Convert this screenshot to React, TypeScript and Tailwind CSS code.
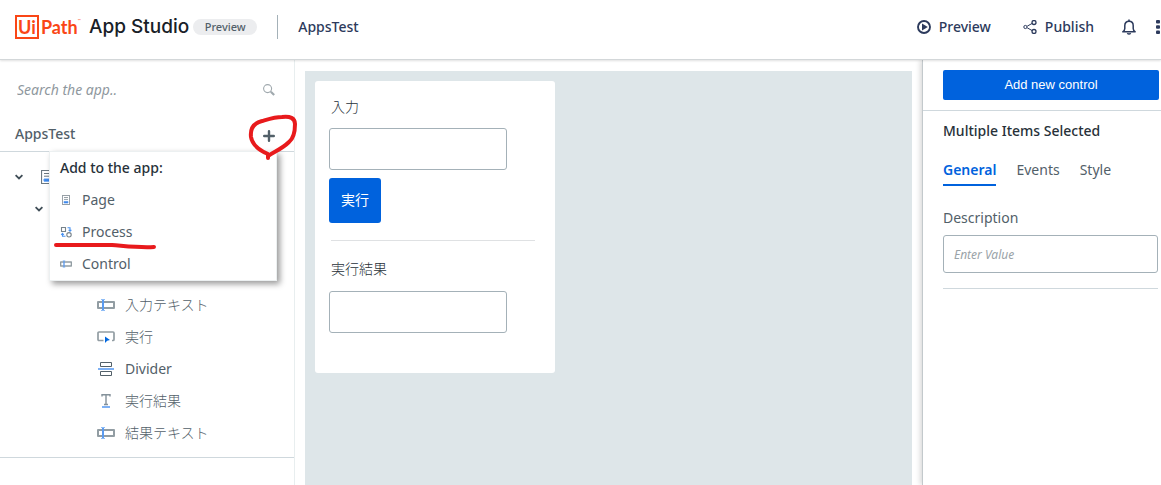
import React, { useState } from 'react'

interface IconProps {
  className?: string
}

function SearchIcon({ className }: IconProps) {
  return (
    <svg className={className} viewBox="0 0 12 12" fill="none" stroke="#a0a9ae">
      <circle cx="4.6" cy="4.6" r="4" strokeWidth="1.1" />
      <path d="M7.8 7.8L11.2 11" strokeWidth="2.2" />
    </svg>
  )
}

function PlusIcon({ className }: IconProps) {
  return (
    <svg className={className} viewBox="0 0 12 12" fill="none" stroke="#526069" strokeWidth="2.4" strokeLinecap="round">
      <path d="M6 1.2V10.8M1.2 6H10.8" />
    </svg>
  )
}

function CaretIcon({ className }: IconProps) {
  return (
    <svg className={className} viewBox="0 0 8 6" fill="none" stroke="#3f4d56" strokeWidth="1.8">
      <path d="M0.6 1.2L4 4.4L7.4 1.2" />
    </svg>
  )
}

function PageIcon({ className }: IconProps) {
  return (
    <svg className={className} viewBox="0 0 12 14" fill="none" stroke="#6b7881" preserveAspectRatio="none">
      <path d="M0.5 0.5H11.5V13.5H0.5Z" strokeWidth="1.2" />
      <path d="M3 3.5H9M3 6.2H9" />
      <path d="M3 9H9V11.2H3Z" fill="#2d7de8" stroke="#5b9bf0" />
    </svg>
  )
}

function ProcessIcon({ className }: IconProps) {
  return (
    <svg className={className} viewBox="0 0 12 12" fill="none" stroke="#77838b" strokeWidth="1.1">
      <path d="M1.5 1.5H5.5V5.5H1.5Z" />
      <circle cx="9" cy="8.8" r="2.2" />
      <path d="M7.5 1.8H10V4.5M8.6 3.8L10 5.2L11.4 3.8M5.5 10.2H2.5V7.8M1.2 8.8L2.5 7.4L3.8 8.8" stroke="#4a92f0" />
    </svg>
  )
}

function TextboxIcon({ className }: IconProps) {
  return (
    <svg className={className} viewBox="0 0 18 12" fill="none">
      <path d="M1 3H17V9H1Z" stroke="#929da3" strokeWidth="2" strokeLinejoin="round" />
      <path d="M6 1V11" stroke="#5b9bf0" strokeWidth="2" />
      <path d="M4 0.5H8M4 11.5H8" stroke="#8fbdf6" />
    </svg>
  )
}

function ButtonIcon({ className }: IconProps) {
  return (
    <svg className={className} viewBox="0 0 18 12" fill="none">
      <path d="M6.5 9.5H2Q1 9.5 1 8.5V2Q1 1 2 1H16Q17 1 17 2V8.5Q17 9.5 16 9.5H15" stroke="#929da3" strokeWidth="1.7" />
      <path d="M8 5.5L13 9L10.2 9.7L8 12Z" fill="#0067df" />
    </svg>
  )
}

function DividerIcon({ className }: IconProps) {
  return (
    <svg className={className} viewBox="0 0 18 14" fill="none">
      <path d="M3.5 0.5H14.5V4.5H3.5ZM3.5 9.5H14.5V13.5H3.5Z" stroke="#526069" />
      <path d="M1 7H17" stroke="#7db0f4" strokeWidth="2" />
    </svg>
  )
}

function LabelIcon({ className }: IconProps) {
  return (
    <svg className={className} viewBox="0 0 18 14" fill="none">
      <path d="M5 2.5V0.7H13V2.5M9 0.7V10.5M7 10.5H11" stroke="#84919a" strokeWidth="1.4" />
      <path d="M5 13H13" stroke="#7db0f4" strokeWidth="2" />
    </svg>
  )
}

function PlayIcon({ className }: IconProps) {
  return (
    <svg className={className} viewBox="0 0 14 14">
      <circle cx="7" cy="7" r="6" fill="none" stroke="#2c3a5c" strokeWidth="1.9" />
      <path d="M5 3.6L10.8 7L5 10.4Z" fill="#2c3a5c" />
    </svg>
  )
}

function ShareIcon({ className }: IconProps) {
  return (
    <svg className={className} viewBox="0 0 14 14" fill="none" stroke="#2c3a5c">
      <circle cx="2.4" cy="7" r="1.6" />
      <circle cx="11" cy="2.5" r="2" strokeWidth="1.3" />
      <circle cx="11" cy="11.5" r="2" strokeWidth="1.3" />
      <path d="M4.2 6.2L9.2 3.4M4.2 7.8L9.2 10.6" />
    </svg>
  )
}

function BellIcon({ className }: IconProps) {
  return (
    <svg className={className} viewBox="0 0 14 16" fill="none" stroke="#2c3a5c" strokeWidth="1.5">
      <path d="M0.8 12.8H13.2C11.8 11.9 11.2 11 11.2 9.5V6.5C11.2 3.9 9.5 2.2 7 2.2C4.5 2.2 2.8 3.9 2.8 6.5V9.5C2.8 11 2.2 11.9 0.8 12.8Z" strokeLinejoin="round" />
      <path d="M7 0.4V2.2" />
      <path d="M5.3 14.2Q7 16 8.7 14.2" />
    </svg>
  )
}

function DotsIcon({ className }: IconProps) {
  return (
    <svg className={className} viewBox="0 0 4 14" fill="#2c3a5c">
      <rect width="4" height="3.4" rx="1" />
      <rect y="5.3" width="4" height="3.4" rx="1" />
      <rect y="10.6" width="4" height="3.4" rx="1" />
    </svg>
  )
}

const treeItems = [
  { label: '入力テキスト', icon: <TextboxIcon className="h-3 w-[18px]" /> },
  { label: '実行', icon: <ButtonIcon className="h-3 w-[18px]" /> },
  { label: 'Divider', icon: <DividerIcon className="h-3.5 w-[18px]" /> },
  { label: '実行結果', icon: <LabelIcon className="h-3.5 w-[18px]" /> },
  { label: '結果テキスト', icon: <TextboxIcon className="h-3 w-[18px]" /> },
]

const menuItems = [
  { label: 'Page', icon: <PageIcon className="h-2.5 w-2" /> },
  { label: 'Process', icon: <ProcessIcon className="h-3 w-3" /> },
  { label: 'Control', icon: <TextboxIcon className="h-2 w-3" /> },
]

const tabs = ['General', 'Events', 'Style']

function Header() {
  return (
    <header className="relative z-10 flex h-[60px] shrink-0 items-center justify-between overflow-hidden border-b border-[#d3d7d9] bg-white pb-[5px] pl-[15px] pr-px shadow-[0_1px_2px_rgba(0,0,0,0.12)]">
      <div className="flex items-center">
        <a href="#" className="flex w-[66px] items-center font-['Lato',sans-serif] text-[#fa4616]">
          <span className="flex h-6 w-6 shrink-0 items-center justify-center border-2 border-[#fa4616] text-lg leading-none font-bold">Ui</span>
          <span className="ml-0.5 text-lg leading-none font-bold">Path</span>
          <span className="mb-3 text-[4px] leading-none">™</span>
        </a>
        <h1 className="ml-2 font-['Inter',sans-serif] text-[19px] leading-6 font-medium text-[#182027]">App Studio</h1>
        <span className="ml-1 flex h-4 w-16 items-center justify-center rounded-full bg-[#ecedef] text-[11px] font-medium text-[#526069]">Preview</span>
        <span className="ml-5 h-6 w-px bg-[#a4b1b8]" />
        <span className="ml-5 text-sm font-medium text-[#2c3a5c]">AppsTest</span>
      </div>
      <div className="flex items-center text-sm font-medium text-[#2c3a5c]">
        <button className="flex items-center gap-2">
          <PlayIcon className="h-3.5 w-3.5" />
          Preview
        </button>
        <button className="ml-8 flex items-center gap-2">
          <ShareIcon className="h-3.5 w-3.5" />
          Publish
        </button>
        <button aria-label="Notifications" className="ml-7">
          <BellIcon className="h-4 w-3.5" />
        </button>
        <button aria-label="More" className="ml-5">
          <DotsIcon className="h-3.5 w-1" />
        </button>
      </div>
    </header>
  )
}

function AddMenu() {
  return (
    <div className="absolute top-full left-[49px] z-20 w-[228px] border border-[#ecf0f1] bg-white shadow-[3px_3px_6px_rgba(0,0,0,0.4)]">
      <p className="px-[10px] py-1 text-sm leading-6 font-medium text-[#273139]">Add to the app:</p>
      {menuItems.map((item) => (
        <button key={item.label} className="flex h-8 w-full items-center gap-2.5 px-[10px] text-sm text-[#526069]">
          <span className="flex w-3 justify-center">{item.icon}</span>
          {item.label}
        </button>
      ))}
    </div>
  )
}

function Sidebar() {
  return (
    <aside className="w-[295px] shrink-0 border-r border-[#e8eeef] bg-white">
      <div className="flex h-[60px] items-center px-[17px]">
        <input
          aria-label="Search the app"
          placeholder="Search the app.."
          className="min-w-0 flex-1 text-sm italic outline-none placeholder:text-[#8f989e]"
        />
        <SearchIcon className="mr-0.5 h-3 w-3" />
      </div>
      <div className="relative flex h-8 items-center justify-between border-b border-[#cfd8dd] pl-[15px] pr-[19px]">
        <h2 className="pb-1 text-sm font-medium text-[#526069]">AppsTest</h2>
        <button aria-label="Add to the app">
          <PlusIcon className="h-3 w-3" />
        </button>
        <AddMenu />
      </div>
      <div className="border-b border-[#cfd8dd] pt-[9px] pb-2">
        <div className="flex h-8 items-center gap-[18px] pl-[15px]">
          <CaretIcon className="h-1.5 w-2" />
          <PageIcon className="h-3.5 w-3" />
        </div>
        <div className="flex h-8 items-center pl-[35px]">
          <CaretIcon className="h-1.5 w-2" />
        </div>
        <ul className="mt-16">
          {treeItems.map((item) => (
            <li key={item.label} className="flex h-8 items-center gap-2.5 pl-[97px] text-sm text-[#526069]">
              {item.icon}
              <span className={item.label === 'Divider' ? '' : 'font-light'}>{item.label}</span>
            </li>
          ))}
        </ul>
      </div>
    </aside>
  )
}

function Canvas() {
  return (
    <main className="flex min-w-0 flex-1 px-2.5 pt-[11px]">
      <div className="flex-1 bg-[#dee6e9] p-2.5 text-sm font-light text-[#273139]">
        <div className="w-60 rounded-[3px] bg-white px-3.5 pt-4 pb-10">
          <label htmlFor="input-text" className="block pl-0.5 leading-5">入力</label>
          <input id="input-text" className="mt-[11px] block h-[42px] w-[178px] rounded-[3px] border border-[#a4b1b8] px-2" />
          <button className="mt-2 block h-[45px] w-[52px] rounded-[3px] bg-[#0062dd] pb-0.5 font-normal text-white">実行</button>
          <hr className="mt-[17px] mr-1.5 ml-0.5 border-[#dfe1e3]" />
          <label htmlFor="result-text" className="mt-[18px] block pl-0.5 leading-5">実行結果</label>
          <input id="result-text" className="mt-3 block h-[42px] w-[178px] rounded-[3px] border border-[#a4b1b8] px-2" />
        </div>
      </div>
    </main>
  )
}

function Properties() {
  const [active, setActive] = useState('General')

  return (
    <aside className="w-[239px] shrink-0 border-l border-[#c3c9cc] bg-white shadow-[-2px_0_5px_rgba(0,0,0,0.15)]">
      <div className="border-b border-[#cfd8dd] pt-2.5 pr-0.5 pb-2.5 pl-5">
        <button className="h-[30px] w-full rounded-[2px] bg-[#0062dd] font-['Liberation_Sans',sans-serif] text-[13px] text-white">Add new control</button>
      </div>
      <div className="pt-2.5 pr-[3px] pl-5">
        <h2 className="text-sm font-medium text-[#273139]">Multiple Items Selected</h2>
        <div role="tablist" className="mt-[15px] flex gap-5 text-sm text-[#526069]">
          {tabs.map((tab) => (
            <button
              key={tab}
              role="tab"
              aria-selected={tab === active}
              onClick={() => setActive(tab)}
              className={`h-[30px] border-b-2 ${
                tab === active ? 'border-[#0062dd] font-semibold text-[#0062dd]' : 'border-transparent'
              }`}
            >
              {tab}
            </button>
          ))}
        </div>
        <label htmlFor="description" className="mt-[22px] block text-sm text-[#526069]">Description</label>
        <input
          id="description"
          placeholder="Enter Value"
          className="mt-[7px] block h-[38px] w-full rounded-[3px] border border-[#a4b1b8] px-2.5 text-xs italic placeholder:text-[#9aa3a8]"
        />
        <hr className="mt-[15px] border-[#cfd8dd]" />
      </div>
    </aside>
  )
}

// Hand-drawn marks over the add button and the Process entry
function Markup() {
  return (
    <svg className="pointer-events-none absolute top-0 left-0 z-30 h-[300px] w-[310px]" viewBox="0 0 310 300" fill="none" stroke="#e81a1c" strokeWidth="4" strokeLinecap="round" strokeLinejoin="round">
      <path d="M268 158V154C259 150 252 144 251 137C250 128 254 123 262 121C269 119 275 117 282 117C290 116 295 118 295 124C295 132 294 138 289 142C282 149 275 151 268 156" />
      <path d="M56 245H112C125 246 140 248 154 247" />
    </svg>
  )
}

export default function App() {
  return (
    <div className="relative flex min-h-screen flex-col overflow-hidden bg-white font-['Noto_Sans','Noto_Sans_CJK_JP',sans-serif]">
      <Header />
      <div className="flex flex-1">
        <Sidebar />
        <Canvas />
        <Properties />
      </div>
      <Markup />
    </div>
  )
}
